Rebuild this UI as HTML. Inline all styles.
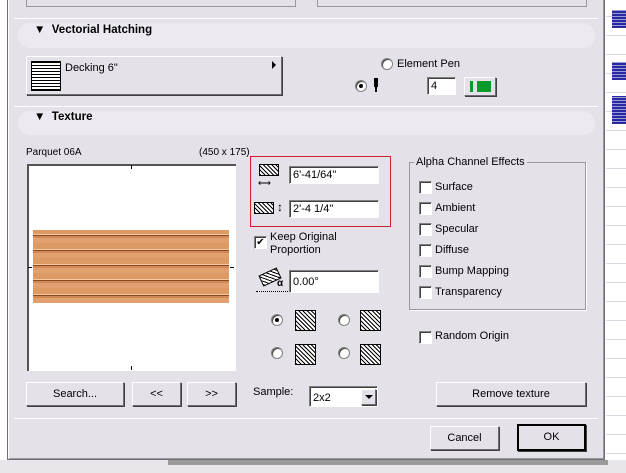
<!DOCTYPE html>
<html><head><style>
*{margin:0;padding:0;box-sizing:border-box}
body{width:626px;height:473px;overflow:hidden;background:#fff;position:relative;font-family:"Liberation Sans",sans-serif;font-size:11px;color:#000}
.a{position:absolute}
.dlg{left:7px;top:-2px;width:598px;height:462px;background:#e5e1e9;border:1px solid #6e6e74;box-shadow:inset 1px 1px 0 #fff, inset -1px -1px 0 #9a97a0}
.sep{height:1px;background:#a5a2ab;border-bottom:1px solid #fff}
.pill{background:#ede9f1;border-radius:12px}
.btn{background:#e5e1e9;border:1px solid;border-color:#fff #6e6c72 #6e6c72 #fff;box-shadow:1px 1px 0 #404040;text-align:center}
.inp{background:#fff;border:1px solid;border-color:#808080 #fff #fff #808080;box-shadow:inset 1px 1px 0 #404040;padding:2px 3px;font-size:11px}
.cb{width:13px;height:13px;background:#fff;border:1px solid;border-color:#808080 #fff #fff #808080;box-shadow:inset 1px 1px 0 #404040}
.rd{width:12px;height:12px;border-radius:50%;background:#fff;border:1px solid #808080;box-shadow:inset 1px 1px 0 #404040}
.hd{font-weight:bold;font-size:11.5px}
.hatch{background:repeating-linear-gradient(45deg,#000 0 1px,#fff 1px 3px);border:1px solid #000}
</style></head><body>
<div class="a" style="left:606px;top:0;width:20px;height:473px;background:repeating-linear-gradient(0deg,#d8d8e0 0 1px,#fff 1px 19px)"></div>
<div class="a" style="left:612px;top:10px;width:14px;height:18px;background:repeating-linear-gradient(0deg,#2a2aa0 0 2px,#9a9ad8 2px 3px)"></div>
<div class="a" style="left:612px;top:62px;width:14px;height:18px;background:repeating-linear-gradient(0deg,#2a2aa0 0 2px,#9a9ad8 2px 3px)"></div>
<div class="a" style="left:612px;top:96px;width:14px;height:28px;background:repeating-linear-gradient(0deg,#2a2aa0 0 2px,#9a9ad8 2px 3px)"></div>
<div class="a" style="left:0;top:460px;width:626px;height:13px;background:#e8e6ea"></div>
<div class="a" style="left:168px;top:460px;width:440px;height:5px;background:#9a9a9a"></div>
<div class="a dlg"></div>
<div class="a" style="left:26px;top:-2px;width:270px;height:9px;border:1px solid #9a97a0;border-top:none"></div>
<div class="a" style="left:317px;top:-2px;width:270px;height:9px;border:1px solid #9a97a0;border-top:none"></div>
<div class="a sep" style="left:14px;top:18px;width:584px"></div>
<div class="a pill" style="left:18px;top:23px;width:577px;height:25px"></div>
<div class="a hd" style="left:34px;top:24px">▼&nbsp; Vectorial Hatching</div>
<div class="a btn" style="left:26px;top:56px;width:256px;height:39px"></div>
<div class="a" style="left:31px;top:61px;width:30px;height:30px;border:1px solid #000;background:repeating-linear-gradient(0deg,#000 0 1px,#fff 1px 3px)"></div>
<div class="a" style="left:65px;top:62px">Decking 6"</div>
<div class="a" style="left:272px;top:61px;width:0;height:0;border-left:4px solid #000;border-top:4px solid transparent;border-bottom:4px solid transparent"></div>
<div class="a rd" style="left:381px;top:58px"></div>
<div class="a" style="left:397px;top:58px">Element Pen</div>
<div class="a rd" style="left:355px;top:80px"><div style="width:4px;height:4px;background:#000;border-radius:50%;margin:3px"></div></div>
<div class="a" style="left:374px;top:78px;width:4px;height:9px;background:#000"></div>
<div class="a" style="left:375px;top:87px;width:2px;height:5px;background:#000"></div>
<div class="a inp" style="left:427px;top:77px;width:29px;height:18px">4</div>
<div class="a btn" style="left:464px;top:77px;width:32px;height:19px"></div>
<div class="a" style="left:470px;top:81px;width:3px;height:11px;background:#0a9a2a"></div>
<div class="a" style="left:477px;top:81px;width:14px;height:11px;background:#0a9a2a"></div>
<div class="a sep" style="left:14px;top:106px;width:584px"></div>
<div class="a pill" style="left:18px;top:111px;width:577px;height:24px"></div>
<div class="a hd" style="left:34px;top:111px">▼&nbsp; Texture</div>
<div class="a" style="left:26px;top:147px;font-size:10px">Parquet 06A</div>
<div class="a" style="left:199px;top:147px;font-size:10px">(450 x 175)</div>
<div class="a" style="left:27px;top:164px;width:209px;height:207px;background:#fff;border-left:2px solid #555;border-top:2px solid #555"></div>
<div class="a" style="left:33px;top:230px;width:196px;height:73px;background:repeating-linear-gradient(0deg,#e0a070 0 5px,#d08a58 5px 7px,#8a4a22 7px 8px,#f4c8a4 8px 9px,#dc9a64 9px 15px);"></div>
<div class="a" style="left:131px;top:165px;width:1px;height:4px;background:#000"></div>
<div class="a" style="left:131px;top:366px;width:1px;height:4px;background:#000"></div>
<div class="a" style="left:28px;top:267px;width:4px;height:1px;background:#000"></div>
<div class="a" style="left:230px;top:267px;width:4px;height:1px;background:#000"></div>
<div class="a" style="left:250px;top:156px;width:141px;height:71px;border:1px solid #d02030"></div>
<div class="a hatch" style="left:259px;top:164px;width:20px;height:12px"></div>
<div class="a" style="left:258px;top:178px;font-size:9px">⟷</div>
<div class="a inp" style="left:289px;top:166px;width:90px;height:18px">6'-41/64"</div>
<div class="a hatch" style="left:254px;top:202px;width:20px;height:12px"></div>
<div class="a" style="left:277px;top:200px;font-size:12px">↕</div>
<div class="a inp" style="left:289px;top:200px;width:90px;height:18px">2'-4 1/4"</div>
<div class="a cb" style="left:254px;top:236px;font-size:10px;line-height:11px;text-align:center">✔</div>
<div class="a" style="left:270px;top:231px;line-height:13px">Keep Original<br>Proportion</div>
<div class="a hatch" style="left:260px;top:271px;width:20px;height:12px;transform:rotate(-25deg)"></div>
<div class="a" style="left:277px;top:278px;font-size:10px;font-weight:bold">α</div>
<div class="a" style="left:256px;top:291px;width:32px;border-top:1px dotted #000"></div>
<div class="a inp" style="left:289px;top:270px;width:90px;height:23px;padding-top:5px">0.00°</div>
<div class="a rd" style="left:271px;top:314px"><div style="width:4px;height:4px;background:#000;border-radius:50%;margin:3px"></div></div>
<div class="a hatch" style="left:295px;top:310px;width:21px;height:21px"></div>
<div class="a rd" style="left:338px;top:314px"></div>
<div class="a hatch" style="left:360px;top:310px;width:21px;height:21px"></div>
<div class="a rd" style="left:271px;top:347px"></div>
<div class="a hatch" style="left:295px;top:344px;width:21px;height:21px"></div>
<div class="a rd" style="left:338px;top:347px"></div>
<div class="a hatch" style="left:360px;top:344px;width:21px;height:21px"></div>
<div class="a" style="left:409px;top:162px;width:177px;height:148px;border:1px solid #9a97a0;box-shadow:1px 1px 0 #fff"></div>
<div class="a" style="left:414px;top:156px;background:#e5e1e9;padding:0 2px">Alpha Channel Effects</div>
<div class="a cb" style="left:419px;top:181px"></div><div class="a" style="left:435px;top:181px">Surface</div>
<div class="a cb" style="left:419px;top:202px"></div><div class="a" style="left:435px;top:202px">Ambient</div>
<div class="a cb" style="left:419px;top:223px"></div><div class="a" style="left:435px;top:223px">Specular</div>
<div class="a cb" style="left:419px;top:244px"></div><div class="a" style="left:435px;top:244px">Diffuse</div>
<div class="a cb" style="left:419px;top:265px"></div><div class="a" style="left:435px;top:265px">Bump Mapping</div>
<div class="a cb" style="left:419px;top:286px"></div><div class="a" style="left:435px;top:286px">Transparency</div>
<div class="a cb" style="left:419px;top:331px"></div><div class="a" style="left:435px;top:330px">Random Origin</div>
<div class="a btn" style="left:26px;top:382px;width:98px;height:24px;line-height:22px">Search...</div>
<div class="a btn" style="left:132px;top:382px;width:49px;height:24px;line-height:22px">&lt;&lt;</div>
<div class="a btn" style="left:187px;top:382px;width:49px;height:24px;line-height:22px">&gt;&gt;</div>
<div class="a" style="left:253px;top:386px">Sample:</div>
<div class="a inp" style="left:309px;top:386px;width:69px;height:21px;padding-top:5px">2x2</div>
<div class="a btn" style="left:361px;top:389px;width:15px;height:16px"><div style="width:0;height:0;border-top:4px solid #000;border-left:4px solid transparent;border-right:4px solid transparent;margin:5px auto"></div></div>
<div class="a btn" style="left:436px;top:382px;width:150px;height:24px;line-height:22px">Remove texture</div>
<div class="a sep" style="left:14px;top:418px;width:584px"></div>
<div class="a btn" style="left:430px;top:426px;width:69px;height:24px;line-height:22px">Cancel</div>
<div class="a btn" style="left:517px;top:424px;width:69px;height:27px;line-height:23px;border:2px solid #000">OK</div>
</body></html>
